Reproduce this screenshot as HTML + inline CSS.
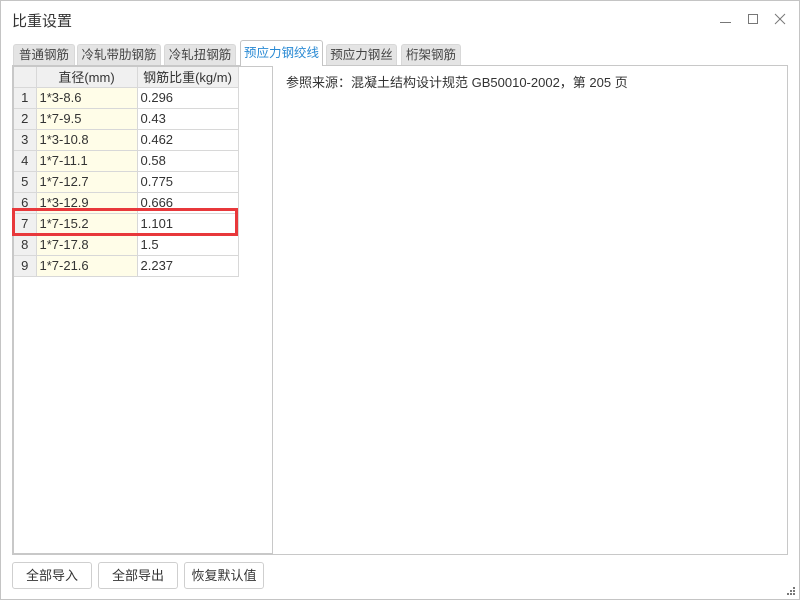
<!DOCTYPE html>
<html><head><meta charset="utf-8"><style>
*{margin:0;padding:0;box-sizing:border-box}
body{width:800px;height:600px;position:relative;background:#fff;font-family:"Liberation Sans","Noto Sans CJK SC",sans-serif;font-size:13px;color:#333;overflow:hidden}
.win{position:absolute;left:0;top:0;width:800px;height:600px;border:1px solid #c4c4c4}
.title{position:absolute;left:12px;top:10px;font-size:15px;color:#333}
.tab{position:absolute;top:44px;height:21px;background:#e4e4e4;border:1px solid #d8d8d8;border-bottom:none;border-radius:3px 3px 0 0;font-size:12.5px;line-height:20px;text-align:center;color:#444}
.tab.act{top:40px;height:26px;background:#fff;color:#2a8ad4;border-color:#c4c4c4;line-height:24px;z-index:2}
.lp{position:absolute;left:12px;top:65px;width:261px;height:490px;border:2px solid #c8c8c8;border-right:1px solid #c8c8c8;border-bottom:2px solid #c8c8c8}
.rp{position:absolute;left:272px;top:65px;width:516px;height:490px;border:1px solid #c8c8c8;border-left:none}
table{position:absolute;left:0;top:0;border-collapse:collapse}
td{border:1px solid #d8d8d8;height:21px;padding:0 3px;font-size:13px;white-space:nowrap}
td.n{background:#f0f0f0;width:22px;text-align:center;border-left:none}
td.d{background:#fffde8;width:101px}
td.w{width:101px}
tr.h td{background:#f0f0f0;text-align:center;height:20px;border-top:none}
.red{position:absolute;left:12px;top:208px;width:226px;height:28px;border:3px solid #e8383b;z-index:3}
.src{position:absolute;left:286px;top:72px;font-size:13px;color:#333}
.btn{position:absolute;top:562px;height:27px;width:80px;border:1px solid #cfcfcf;border-radius:3px;text-align:center;line-height:25px;font-size:13px;color:#333;background:#fff}
</style></head><body>
<div class="win"></div>
<div class="title">比重设置</div>
<svg style="position:absolute;left:715px;top:12px" width="75" height="16">
<line x1="5" y1="10.5" x2="16" y2="10.5" stroke="#777" stroke-width="1"/>
<rect x="33.5" y="2.5" width="9" height="9" fill="none" stroke="#777"/>
<line x1="60" y1="2" x2="70" y2="12" stroke="#777"/><line x1="70" y1="2" x2="60" y2="12" stroke="#777"/>
</svg>
<div class="tab" style="left:13px;width:62px">普通钢筋</div>
<div class="tab" style="left:77px;width:84px">冷轧带肋钢筋</div>
<div class="tab" style="left:164px;width:72px">冷轧扭钢筋</div>
<div class="tab act" style="left:240px;width:83px">预应力钢绞线</div>
<div class="tab" style="left:326px;width:71px">预应力钢丝</div>
<div class="tab" style="left:401px;width:60px">桁架钢筋</div>
<div class="lp"><table>
<tr class="h"><td class="n"></td><td style="width:101px">直径(mm)</td><td style="width:101px">钢筋比重(kg/m)</td></tr>
<tr><td class="n">1</td><td class="d">1*3-8.6</td><td class="w">0.296</td></tr>
<tr><td class="n">2</td><td class="d">1*7-9.5</td><td class="w">0.43</td></tr>
<tr><td class="n">3</td><td class="d">1*3-10.8</td><td class="w">0.462</td></tr>
<tr><td class="n">4</td><td class="d">1*7-11.1</td><td class="w">0.58</td></tr>
<tr><td class="n">5</td><td class="d">1*7-12.7</td><td class="w">0.775</td></tr>
<tr><td class="n">6</td><td class="d">1*3-12.9</td><td class="w">0.666</td></tr>
<tr><td class="n">7</td><td class="d">1*7-15.2</td><td class="w">1.101</td></tr>
<tr><td class="n">8</td><td class="d">1*7-17.8</td><td class="w">1.5</td></tr>
<tr><td class="n">9</td><td class="d">1*7-21.6</td><td class="w">2.237</td></tr>
</table></div>
<div class="rp"></div>
<div class="red"></div>
<div class="src">参照来源：混凝土结构设计规范 GB50010-2002，第 205 页</div>
<div class="btn" style="left:12px">全部导入</div>
<div class="btn" style="left:98px">全部导出</div>
<div class="btn" style="left:184px">恢复默认值</div>
<svg style="position:absolute;left:787px;top:587px" width="10" height="10" fill="#777">
<rect x="6" y="0" width="2" height="2"/><rect x="3" y="3" width="2" height="2"/><rect x="6" y="3" width="2" height="2"/><rect x="0" y="6" width="2" height="2"/><rect x="3" y="6" width="2" height="2"/><rect x="6" y="6" width="2" height="2"/>
</svg>
</body></html>
